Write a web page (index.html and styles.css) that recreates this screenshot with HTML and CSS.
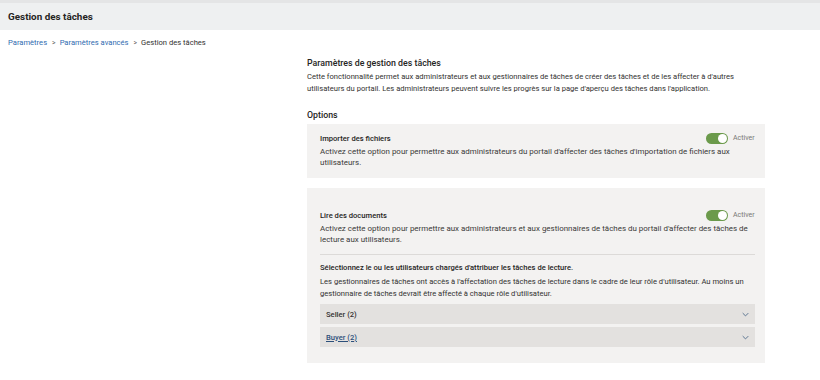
FILE: index.html
```html
<!DOCTYPE html>
<html lang="fr">
<head>
<meta charset="utf-8">
<link rel="stylesheet" href="styles.css">
</head>
<body>
<header class="topbar"><h1 class="page-title">Gestion des tâches</h1></header>
<nav class="breadcrumb">
  <a href="#" class="crumb-link">Paramètres</a><span class="sep">&gt;</span><a href="#" class="crumb-link">Paramètres avancés</a><span class="sep">&gt;</span><span class="crumb-current">Gestion des tâches</span>
</nav>
<main class="content">
  <h2 class="section-title">Paramètres de gestion des tâches</h2>
  <p class="intro">Cette fonctionnalité permet aux administrateurs et aux gestionnaires de tâches de créer des tâches et de les affecter à d'autres utilisateurs du portail. Les administrateurs peuvent suivre les progrès sur la page d'aperçu des tâches dans l'application.</p>
  <h3 class="options-title">Options</h3>

  <section class="card card-first">
    <div class="option-head">
      <span class="option-name">Importer des fichiers</span>
      <span class="toggle-wrap"><span class="toggle"><span class="knob"></span></span><span class="toggle-label">Activer</span></span>
    </div>
    <p class="option-desc">Activez cette option pour permettre aux administrateurs du portail d'affecter des tâches d'importation de fichiers aux utilisateurs.</p>
  </section>

  <section class="card card-second">
    <div class="option-head">
      <span class="option-name">Lire des documents</span>
      <span class="toggle-wrap"><span class="toggle"><span class="knob"></span></span><span class="toggle-label">Activer</span></span>
    </div>
    <p class="option-desc">Activez cette option pour permettre aux administrateurs et aux gestionnaires de tâches du portail d'affecter des tâches de lecture aux utilisateurs.</p>
    <hr class="divider">
    <p class="sub-title">Sélectionnez le ou les utilisateurs chargés d'attribuer les tâches de lecture.</p>
    <p class="sub-desc">Les gestionnaires de tâches ont accès à l'affectation des tâches de lecture dans le cadre de leur rôle d'utilisateur. Au moins un gestionnaire de tâches devrait être affecté à chaque rôle d'utilisateur.</p>
    <div class="accordions">
      <div class="accordion">
        <span class="acc-label">Seller (2)</span>
        <svg class="chev" viewBox="0 0 10 6" width="7" height="5"><path d="M1 1 L5 5 L9 1" fill="none" stroke="#5a7490" stroke-width="1.4"/></svg>
      </div>
      <div class="accordion">
        <span class="acc-label acc-link">Buyer (2)</span>
        <svg class="chev" viewBox="0 0 10 6" width="7" height="5"><path d="M1 1 L5 5 L9 1" fill="none" stroke="#5a7490" stroke-width="1.4"/></svg>
      </div>
    </div>
  </section>
</main>
</body>
</html>
```
FILE: styles.css
```css
* { box-sizing: border-box; }
html, body { margin: 0; padding: 0; background: #ffffff; }
body {
  font-family: Roboto, "Liberation Sans", Arial, sans-serif;
  color: #323130;
  width: 820px;
  height: 380px;
  overflow: hidden;
}
.topbar {
  height: 30px;
  background: #eef0f1;
  border-top: 3px solid #e4e5e6;
  display: flex;
  align-items: center;
  padding-left: 8px;
}
.page-title {
  margin: 0;
  font-size: 9.9px;
  font-weight: 700;
  color: #252423;
}
.breadcrumb {
  padding: 3px 8px 0;
  height: 22px;
  font-size: 7.6px;
  display: flex;
  align-items: center;
}
.crumb-link { color: #2f6bb0; text-decoration: none; }
.sep { color: #605e5c; margin: 0 4px 0 5px; font-size: 6.8px; }
.crumb-current { color: #323130; }
.content {
  margin-left: 307px;
  width: 458px;
  padding-top: 4px;
}
.section-title {
  margin: 0;
  font-size: 8.8px;
  font-weight: 500;
  line-height: 14px;
  color: #252423;
}
.intro {
  margin: 1px 0 0;
  font-size: 7.6px;
  line-height: 12px;
}
.options-title {
  margin: 13px 0 0;
  font-size: 8.8px;
  font-weight: 500;
  line-height: 14px;
  color: #252423;
}
.card {
  background: #f3f2f1;
  padding: 8px 10px 12px 13px;
}
.card-first { margin-top: 2px; height: 54px; }
.card-second { margin-top: 10px; padding-top: 21px; padding-bottom: 16px; }
.option-head {
  display: flex;
  justify-content: space-between;
  align-items: center;
  height: 12px;
}
.option-name {
  font-size: 7.6px;
  font-weight: 500;
  color: #252423;
}
.toggle-wrap { display: flex; align-items: center; gap: 5px; }
.toggle {
  width: 22px;
  height: 11px;
  border-radius: 6px;
  background: #6b9a4b;
  position: relative;
  display: block;
}
.knob {
  position: absolute;
  right: 1px;
  top: 1px;
  width: 9px;
  height: 9px;
  border-radius: 50%;
  background: #ffffff;
}
.toggle-label { font-size: 7px; color: #797775; width: 22px; }
.option-desc {
  margin: 2px 0 0;
  font-size: 7.95px;
  line-height: 11px;
  color: #3b3a39;
}
.divider {
  border: 0;
  border-top: 1px solid #dcdad8;
  margin: 9px 0 0;
}
.sub-title {
  margin: 7px 0 0;
  font-size: 7.6px;
  font-weight: 500;
  line-height: 12px;
  color: #252423;
}
.sub-desc {
  margin: 2px 0 0;
  font-size: 7.6px;
  line-height: 12px;
}
.accordions {
  margin-top: 4px;
  display: flex;
  flex-direction: column;
  gap: 3px;
}
.accordion {
  background: #e3e1df;
  height: 20px;
  display: flex;
  align-items: center;
  justify-content: space-between;
  padding: 0 6px;
}
.acc-label { font-size: 7.6px; font-weight: 500; color: #323130; }
.acc-link { color: #2b4f7a; text-decoration: underline; }
.chev { display: block; }
```
